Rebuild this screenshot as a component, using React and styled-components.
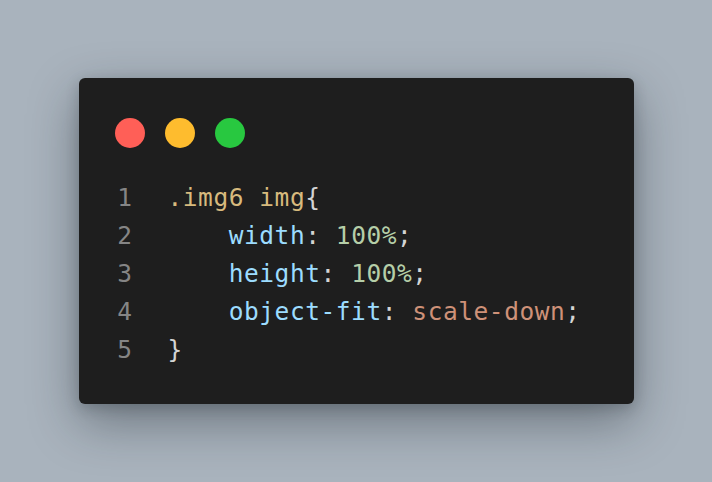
import React from "react";
import styled, { createGlobalStyle } from "styled-components";

const GlobalStyle = createGlobalStyle`
  html, body {
    margin: 0;
    padding: 0;
    background: #a9b3bd;
  }
`;

const Page = styled.div`
  min-height: 100vh;
  display: flex;
  align-items: center;
  justify-content: center;
`;

const Window = styled.div`
  width: 555px;
  box-sizing: border-box;
  padding: 40px 36px 35px;
  background: #1e1e1e;
  border-radius: 6px;
  box-shadow: 0 18px 50px rgba(20, 28, 36, 0.4), 0 4px 14px rgba(20, 28, 36, 0.2);
`;

const Dots = styled.div`
  display: flex;
  gap: 20px;
  margin-bottom: 31px;
`;

const Dot = styled.span`
  width: 30px;
  height: 30px;
  border-radius: 50%;
  background: ${(p) => p.color};
`;

const Code = styled.div`
  font-family: "DejaVu Sans Mono", "Liberation Mono", monospace;
  font-size: 24.5px;
  letter-spacing: 0.55px;
  line-height: 38px;
  white-space: pre;
  color: #d4d4d4;
`;

const Line = styled.div`
  display: flex;
`;

const LineNo = styled.span`
  width: 20px;
  margin-left: -2px;
  margin-right: 35px;
  text-align: right;
  color: #858585;
`;

const Tok = styled.span`
  color: ${(p) =>
    ({
      sel: "#d7ba7d",
      prop: "#9cdcfe",
      num: "#b5cea8",
      str: "#ce9178",
      punc: "#d4d4d4",
    })[p.kind]};
`;

const lines = [
  [["sel", ".img6 img"], ["punc", "{"]],
  [["punc", "    "], ["prop", "width"], ["punc", ": "], ["num", "100%"], ["punc", ";"]],
  [["punc", "    "], ["prop", "height"], ["punc", ": "], ["num", "100%"], ["punc", ";"]],
  [["punc", "    "], ["prop", "object-fit"], ["punc", ": "], ["str", "scale-down"], ["punc", ";"]],
  [["punc", "}"]],
];

export default function App() {
  return (
    <>
      <GlobalStyle />
      <Page>
        <Window>
          <Dots>
            <Dot color="#ff5f57" />
            <Dot color="#febc2e" />
            <Dot color="#28c840" />
          </Dots>
          <Code>
            {lines.map((toks, i) => (
              <Line key={i}>
                <LineNo>{i + 1}</LineNo>
                <span>
                  {toks.map(([kind, text], j) => (
                    <Tok key={j} kind={kind}>
                      {text}
                    </Tok>
                  ))}
                </span>
              </Line>
            ))}
          </Code>
        </Window>
      </Page>
    </>
  );
}
